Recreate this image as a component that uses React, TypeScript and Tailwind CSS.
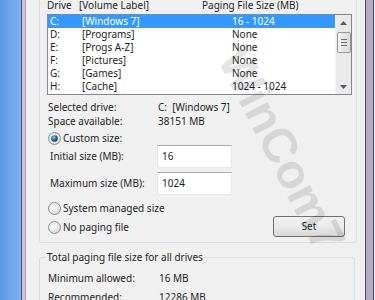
import React from "react";

type Drive = { letter: string; label: string; size: string };

const drives: Drive[] = [
  { letter: "C:", label: "[Windows 7]", size: "16 - 1024" },
  { letter: "D:", label: "[Programs]", size: "None" },
  { letter: "E:", label: "[Progs A-Z]", size: "None" },
  { letter: "F:", label: "[Pictures]", size: "None" },
  { letter: "G:", label: "[Games]", size: "None" },
  { letter: "H:", label: "[Cache]", size: "1024 - 1024" },
];

const Radio = ({ checked }: { checked?: boolean }) => (
  <svg width="13" height="13" viewBox="0 0 13 13" className="shrink-0">
    <defs>
      <radialGradient id="rOff" cx="0.4" cy="0.4" r="0.7">
        <stop offset="0" stopColor="#ffffff" />
        <stop offset="1" stopColor="#d4d4d4" />
      </radialGradient>
      <radialGradient id="rOn" cx="0.4" cy="0.35" r="0.7">
        <stop offset="0" stopColor="#8fd0f5" />
        <stop offset="0.5" stopColor="#1f6ea8" />
        <stop offset="1" stopColor="#0b2f55" />
      </radialGradient>
    </defs>
    <circle cx="6.5" cy="6.5" r="6" fill="url(#rOff)" stroke="#8e8f8f" strokeWidth="1" />
    {checked && <circle cx="6.5" cy="6.5" r="3.3" fill="url(#rOn)" />}
  </svg>
);

const Input = ({ value }: { value: string }) => (
  <div className="w-[75px] h-[23px] bg-white border border-[#e3e9ef] border-t-[#abadb3] border-l-[#e2e3ea] flex items-center pl-[4px]">
    {value}
  </div>
);

const Scrollbar = () => (
  <div className="w-[16px] h-full bg-[#eaeaea] flex flex-col items-center border-l border-[#f5f5f5]">
    <div className="h-[16px] w-full flex items-center justify-center">
      <svg width="7" height="4" viewBox="0 0 7 4">
        <path d="M0 4 L3.5 0 L7 4 Z" fill="#5a5a5a" />
      </svg>
    </div>
    <div className="mt-[1px] w-[14px] h-[21px] rounded-[2px] border border-[#979797] bg-gradient-to-r from-[#f3f3f3] to-[#dcdcdc] flex flex-col items-center justify-center gap-[2px]">
      <div className="w-[6px] h-[1px] bg-[#6a6a6a]" />
      <div className="w-[6px] h-[1px] bg-[#6a6a6a]" />
      <div className="w-[6px] h-[1px] bg-[#6a6a6a]" />
    </div>
    <div className="flex-1" />
    <div className="h-[14px] w-full flex items-center justify-center">
      <svg width="7" height="4" viewBox="0 0 7 4">
        <path d="M0 0 L3.5 4 L7 0 Z" fill="#5a5a5a" />
      </svg>
    </div>
  </div>
);

const App = () => {
  return (
    <div
      className="relative w-[375px] h-[300px] overflow-hidden flex text-[10px] leading-[13px] text-[#1e1e1e]"
      style={{ fontFamily: '"Noto Sans", "Open Sans", sans-serif' }}
    >
      <div className="w-[21px] bg-gradient-to-r from-[#5f97e4] to-[#80b3f2]" />
      <div className="w-[1px] bg-[#4a4d63]" />
      <div className="w-[3px] bg-[#cfc4d8]" />
      <div className="w-[1px] bg-[#a39cae]" />

      <main className="flex-1 bg-[#f0f0f0] pl-[13px] pr-[8px] flex flex-col">
        <div className="-mt-[12px] pt-[10px] pb-[8px] border border-[#d5dfe5] rounded-[3px] flex flex-col">
          <div className="flex pl-[7px]">
            <span className="w-[32px]">Drive</span>
            <span className="w-[123px]">[Volume Label]</span>
            <span>Paging File Size (MB)</span>
          </div>
          <div className="ml-[7px] mr-[4px] mt-[2px] h-[81px] border border-[#828790] bg-white flex">
            <div className="flex-1 flex flex-col">
              {drives.map((d, i) => (
                <div
                  key={d.letter}
                  className={
                    "h-[13px] flex pl-[2px] " + (i === 0 ? "bg-[#3399ff] text-white" : "")
                  }
                >
                  <span className="w-[32px]">{d.letter}</span>
                  <span className="w-[150px]">{d.label}</span>
                  <span>{d.size}</span>
                </div>
              ))}
            </div>
            <Scrollbar />
          </div>

          <div className="mt-[5px] pl-[8px] leading-[14px]">
            <div className="flex">
              <span className="w-[110px]">Selected drive:</span>
              <span>C:&nbsp;&nbsp;[Windows 7]</span>
            </div>
            <div className="flex">
              <span className="w-[110px]">Space available:</span>
              <span>38151 MB</span>
            </div>
          </div>

          <div className="mt-[3px] pl-[8px] h-[14px] flex items-center gap-[2px]">
            <Radio checked />
            <span>Custom size:</span>
          </div>
          <div className="pl-[10px] h-[23px] flex items-center">
            <span className="w-[107px]">Initial size (MB):</span>
            <Input value="16" />
          </div>
          <div className="mt-[4px] pl-[10px] h-[23px] flex items-center">
            <span className="w-[107px]">Maximum size (MB):</span>
            <Input value="1024" />
          </div>

          <div className="mt-[6px] pl-[8px] pr-[11px] flex justify-between items-end">
            <div className="flex flex-col gap-[5px]">
              <div className="h-[14px] flex items-center gap-[2px]">
                <Radio />
                <span>System managed size</span>
              </div>
              <div className="h-[14px] flex items-center gap-[2px]">
                <Radio />
                <span>No paging file</span>
              </div>
            </div>
            <button className="-mb-[3px] w-[72px] h-[21px] rounded-[3px] border border-[#707070] bg-gradient-to-b from-[#f2f2f2] via-[#ebebeb] to-[#d6d6d6] flex items-center justify-center">
              Set
            </button>
          </div>
        </div>

        <fieldset className="mt-[8px] mr-[2px] border border-[#d5dfe5] rounded-[3px] px-[6px] pb-[8px]">
          <legend className="px-[1px]">Total paging file size for all drives</legend>
          <div className="mt-[7px] pl-[2px] flex flex-col gap-[5px] leading-[14px]">
            <div className="flex">
              <span className="w-[111px]">Minimum allowed:</span>
              <span>16 MB</span>
            </div>
            <div className="flex">
              <span className="w-[111px]">Recommended:</span>
              <span>12286 MB</span>
            </div>
          </div>
        </fieldset>
      </main>

      <div className="w-[1px] bg-[#4a4d63]" />
      <div className="w-[7px] bg-[#b9aac6]" />
      <div className="w-[1px] bg-[#4a4d63]" />
      <div className="w-[1px] bg-[#dfe6f2]" />

      <div
        aria-hidden="true"
        className="pointer-events-none absolute left-[171px] top-[126px] text-[48px] font-bold leading-none text-black opacity-[0.1] rotate-[63deg] whitespace-nowrap"
        style={{ fontFamily: '"Liberation Sans", sans-serif' }}
      >
        WinCom7
      </div>
    </div>
  );
};

export default App;
